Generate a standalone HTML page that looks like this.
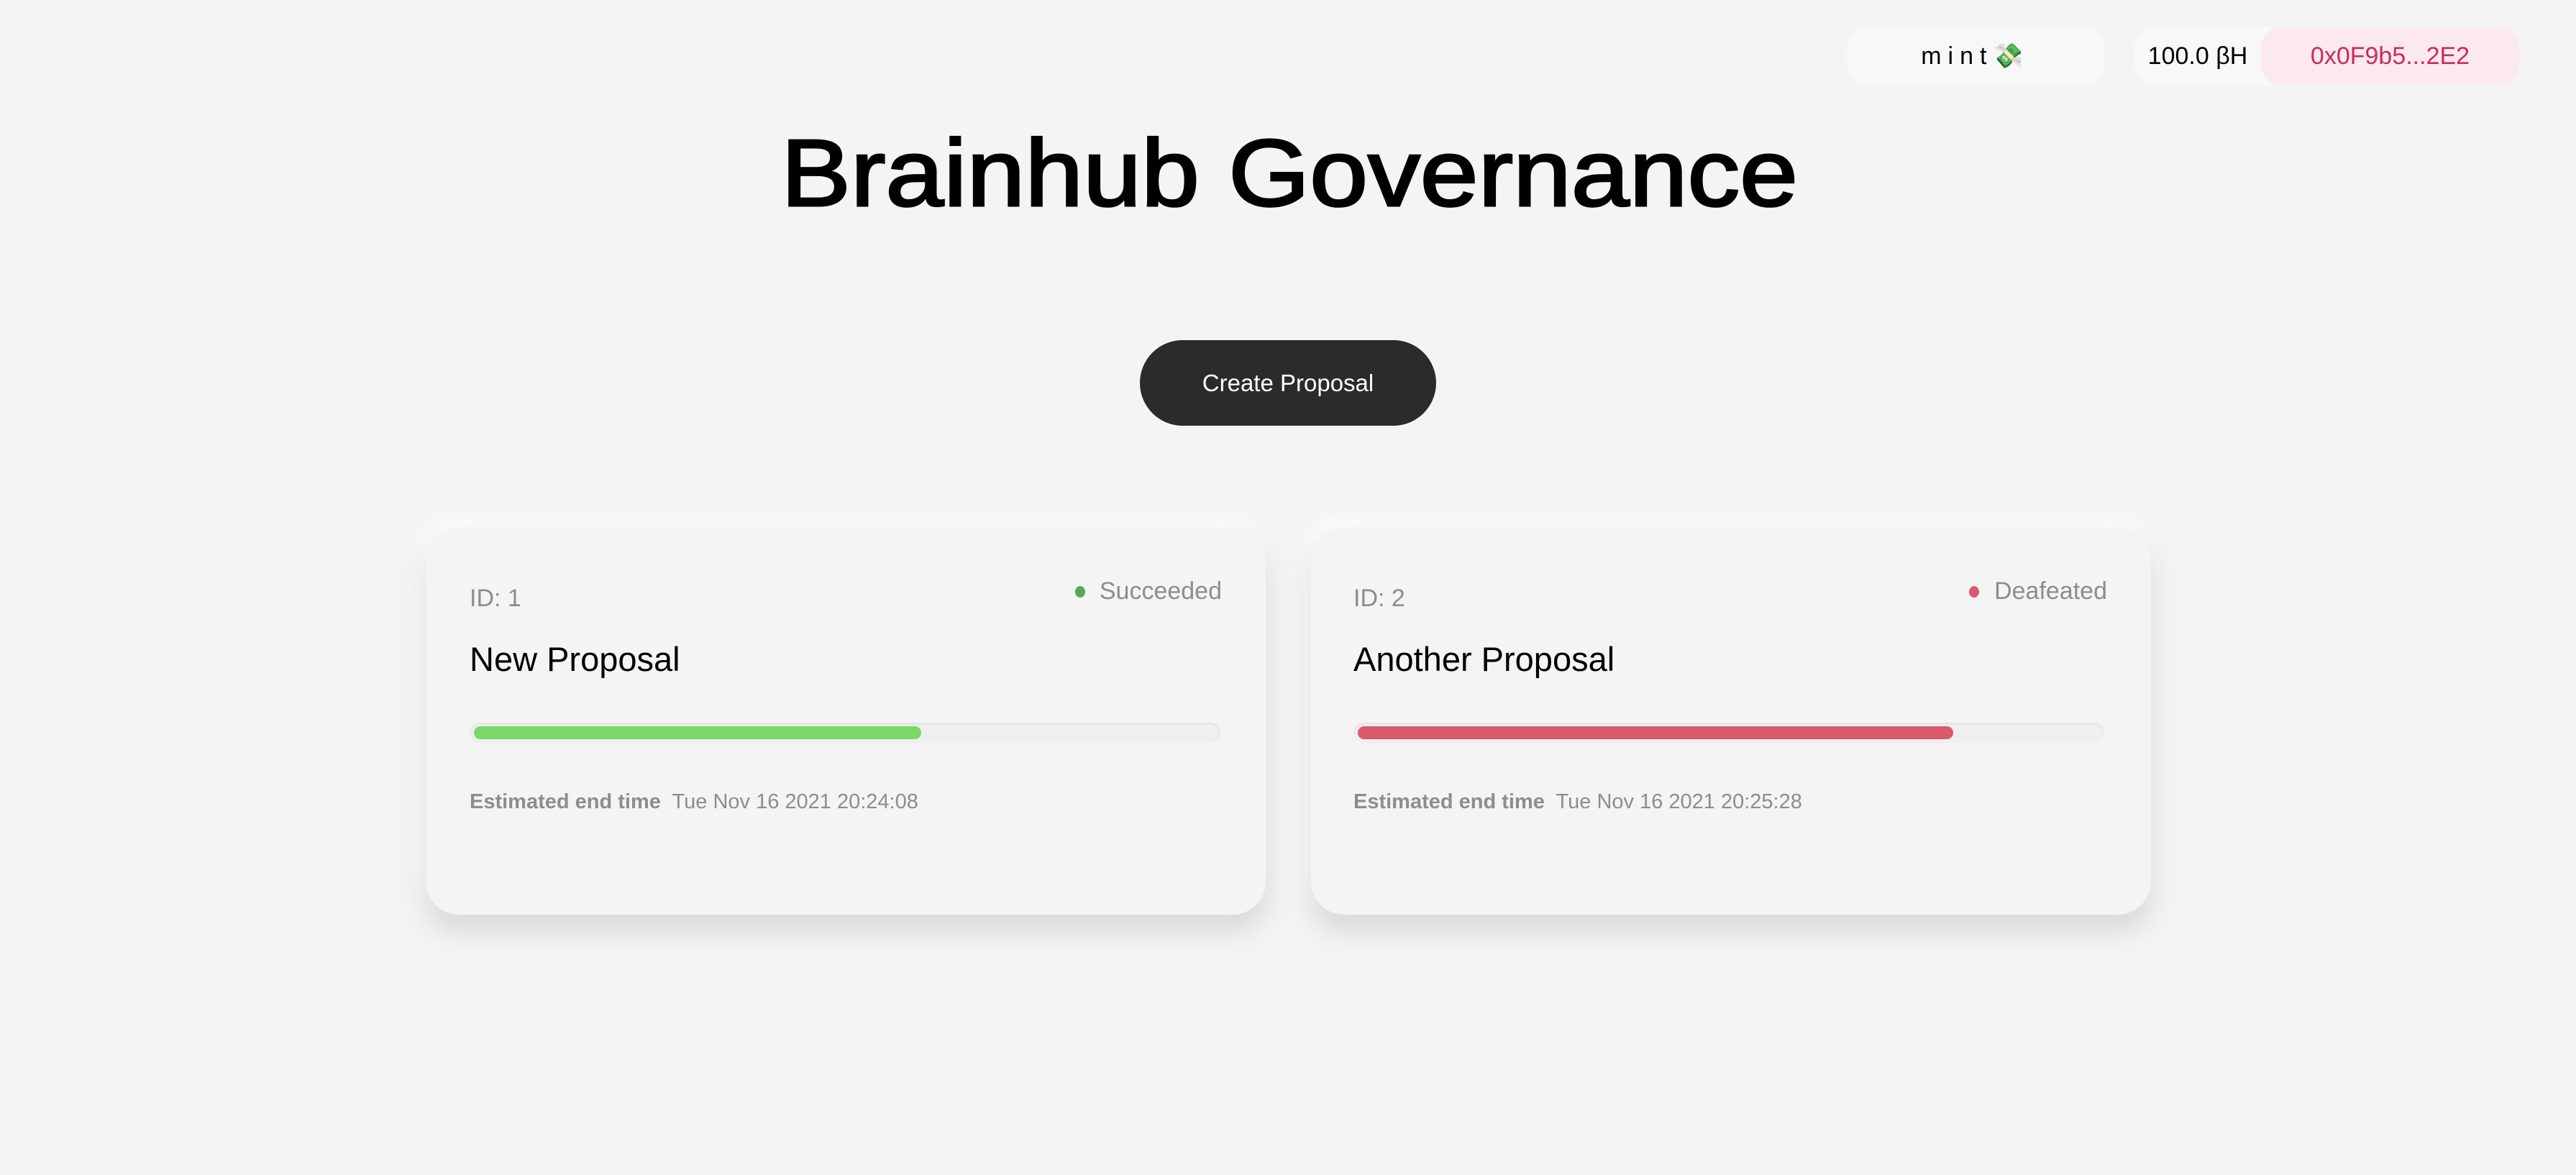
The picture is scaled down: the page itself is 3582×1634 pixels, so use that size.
<!DOCTYPE html>
<html><head><meta charset="utf-8">
<style>
html,body{margin:0;padding:0;}
body{width:3582px;height:1634px;background:#f4f4f4;position:relative;overflow:hidden;font-family:"Liberation Sans",sans-serif;}
.abs{position:absolute;}
.pill{position:absolute;border-radius:28px;}
.card{position:absolute;top:733px;width:1168px;height:539px;background:#f4f4f4;border-radius:46px;box-shadow:0 22px 40px rgba(0,0,0,0.12),-6px -10px 30px rgba(255,255,255,0.9);}
.bar{position:absolute;left:61px;top:272px;width:1044px;height:28px;border-radius:14px;background:#efefef;box-shadow:inset 0 2px 3px rgba(0,0,0,0.06);}
.fill{position:absolute;left:6px;top:5px;height:18px;border-radius:9px;}
svg text{font-family:"Liberation Sans",sans-serif;}
</style></head><body>
<div class="pill" style="left:2568px;top:38px;width:358px;height:80px;background:#f7f8fa;"></div>
<div class="abs" style="left:2568px;top:38px;width:358px;height:80px;line-height:80px;text-align:center;font-size:34px;letter-spacing:9px;color:#000;">mint💸</div>
<div class="pill" style="left:2968px;top:38px;width:535px;height:80px;background:#f7f8fa;"></div>
<div class="abs" style="left:2968px;top:38px;width:176px;height:80px;line-height:80px;text-align:center;font-size:34px;color:#000;">100.0 βH</div>
<div class="pill" style="left:3144px;top:38px;width:359px;height:80px;background:#fbe9ee;"></div>
<div class="abs" style="left:3144px;top:38px;width:359px;height:80px;line-height:80px;text-align:center;font-size:34px;color:#cc2a62;">0x0F9b5...2E2</div>

<svg class="abs" style="left:0;top:0" width="3582" height="320">
<text x="1086" y="286" font-size="132" textLength="1414" lengthAdjust="spacingAndGlyphs" fill="#000" stroke="#000" stroke-width="3">Brainhub Governance</text>
</svg>

<div class="abs" style="left:1585px;top:473px;width:412px;height:119px;border-radius:60px;background:#2b2b2b;color:#fff;font-size:33px;line-height:119px;text-align:center;">Create Proposal</div>

<div class="card" style="left:592px;">
  <div class="abs" style="left:61px;top:80px;font-size:34px;color:#8d8d8d;">ID: 1</div>
  <div class="abs" style="left:903px;top:82px;width:14px;height:16px;border-radius:50%;background:#55a85a;"></div>
  <div class="abs" style="right:61px;top:70px;font-size:34px;color:#8d8d8d;">Succeeded</div>
  <div class="abs" style="left:61px;top:156px;font-size:47px;color:#000;">New Proposal</div>
  <div class="bar"><div class="fill" style="width:622px;background:#79d866;"></div></div>
  <div class="abs" style="left:61px;top:366px;font-size:29px;color:#8d8d8d;"><b>Estimated end time</b>&nbsp; Tue Nov 16 2021 20:24:08</div>
</div>

<div class="card" style="left:1823px;">
  <div class="abs" style="left:59px;top:80px;font-size:34px;color:#8d8d8d;">ID: 2</div>
  <div class="abs" style="left:915px;top:82px;width:14px;height:16px;border-radius:50%;background:#d9596f;"></div>
  <div class="abs" style="right:61px;top:70px;font-size:34px;color:#8d8d8d;">Deafeated</div>
  <div class="abs" style="left:59px;top:156px;font-size:47px;color:#000;">Another Proposal</div>
  <div class="bar" style="left:59px;"><div class="fill" style="width:828px;background:#d9596f;"></div></div>
  <div class="abs" style="left:59px;top:366px;font-size:29px;color:#8d8d8d;"><b>Estimated end time</b>&nbsp; Tue Nov 16 2021 20:25:28</div>
</div>
</body></html>
